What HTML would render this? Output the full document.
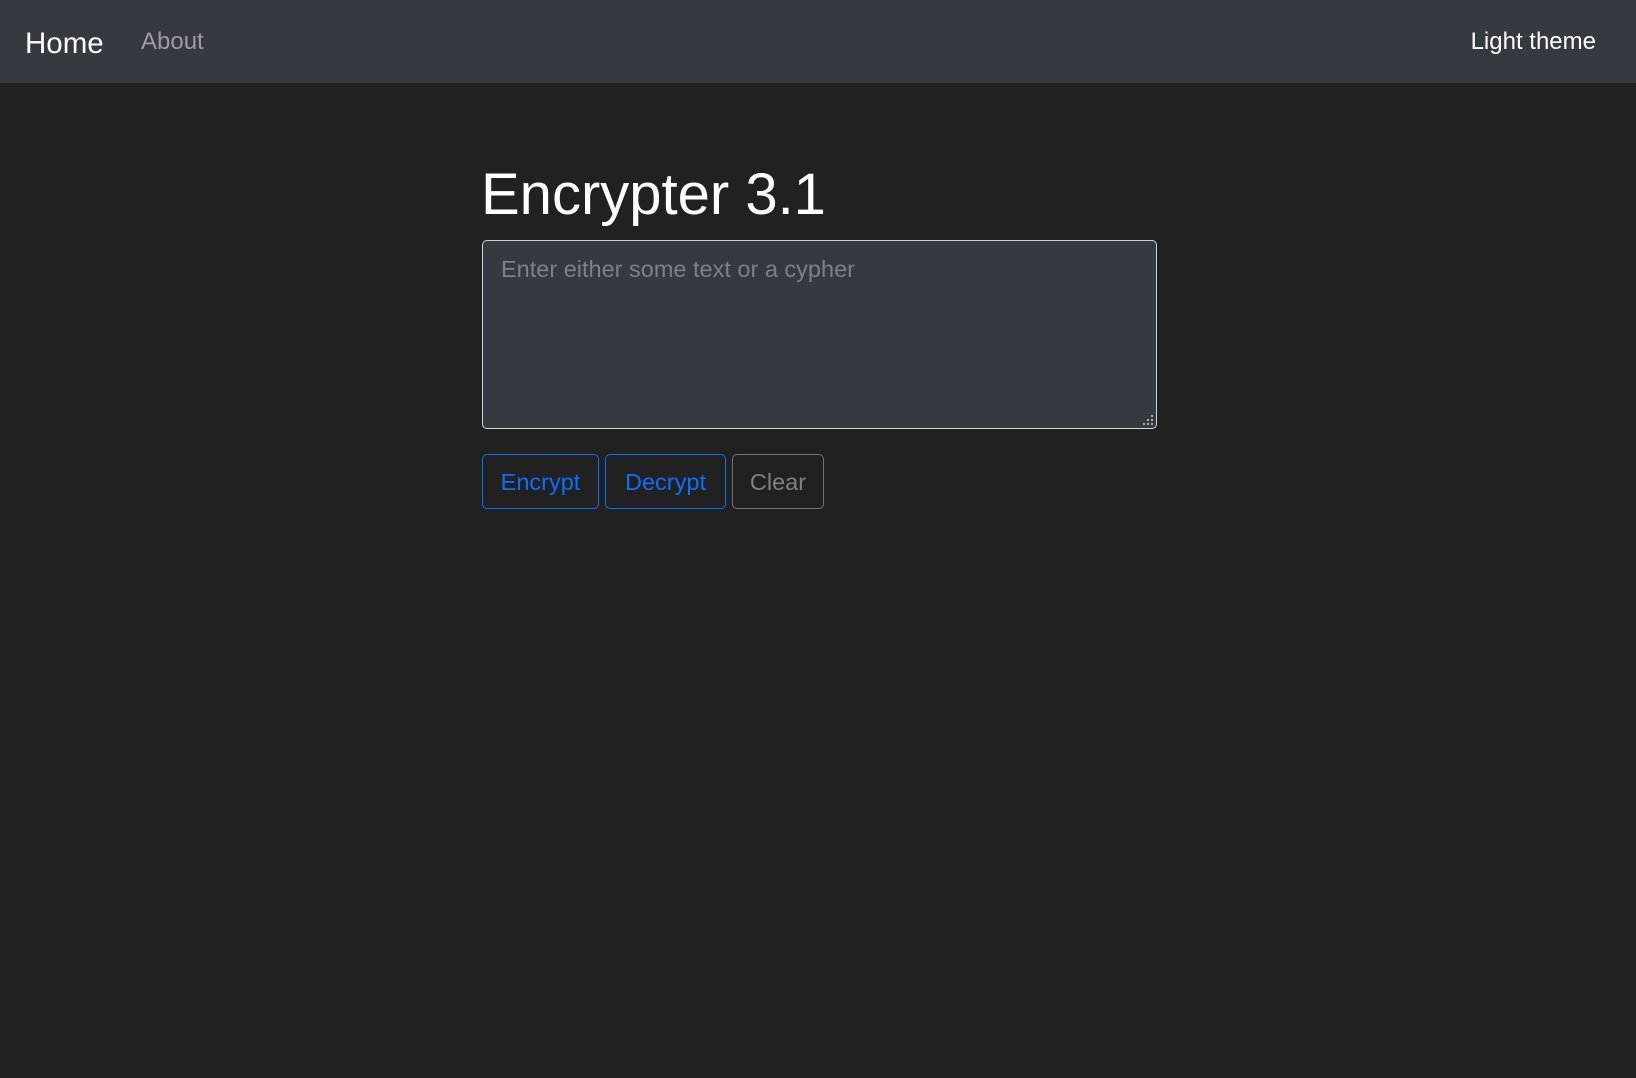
<!DOCTYPE html>
<html><head><meta charset="utf-8"><style>
*{box-sizing:border-box;margin:0;padding:0}
body{width:1636px;height:1078px;background:#212121;font-family:"Liberation Sans",sans-serif;overflow:hidden;position:relative}
.nav{position:absolute;left:0;top:0;width:1636px;height:83px;background:#343a40}
.nav span{position:absolute;line-height:1}
.home{left:25px;top:29px;font-size:29.5px;color:#fff}
.about{left:141px;top:30px;font-size:24px;color:#9a9da1}
.light{right:40px;top:30px;font-size:24px;color:#fff}
h1{position:absolute;left:481px;top:166px;font-size:58px;font-weight:normal;color:#fff;line-height:1}
.ta{position:absolute;left:482px;top:240px;width:675px;height:189px;background:#343a40;border:1px solid #ced4da;border-radius:5px}
.ta span{position:absolute;left:18px;top:15px;font-size:23.5px;color:#7b8188}
.btn{position:absolute;top:454px;height:55px;border:1px solid #0d6efd;border-radius:5px;color:#0d6efd;font-size:23.5px;line-height:55px;text-align:center}
</style></head><body>
<div class="nav"><span class="home">Home</span><span class="about">About</span><span class="light">Light theme</span></div>
<h1>Encrypter 3.1</h1>
<div class="ta"><span>Enter either some text or a cypher</span>
<svg style="position:absolute;right:3px;bottom:3px" width="10" height="10"><g fill="#aaa"><rect x="8" y="0" width="2" height="2"/><rect x="4" y="4" width="2" height="2"/><rect x="8" y="4" width="2" height="2"/><rect x="0" y="8" width="2" height="2"/><rect x="4" y="8" width="2" height="2"/><rect x="8" y="8" width="2" height="2"/></g></svg></div>
<div class="btn" style="left:482px;width:117px">Encrypt</div>
<div class="btn" style="left:605px;width:121px">Decrypt</div>
<div class="btn" style="left:732px;width:92px;border-color:#6c757d;color:#7b8188">Clear</div>
</body></html>
